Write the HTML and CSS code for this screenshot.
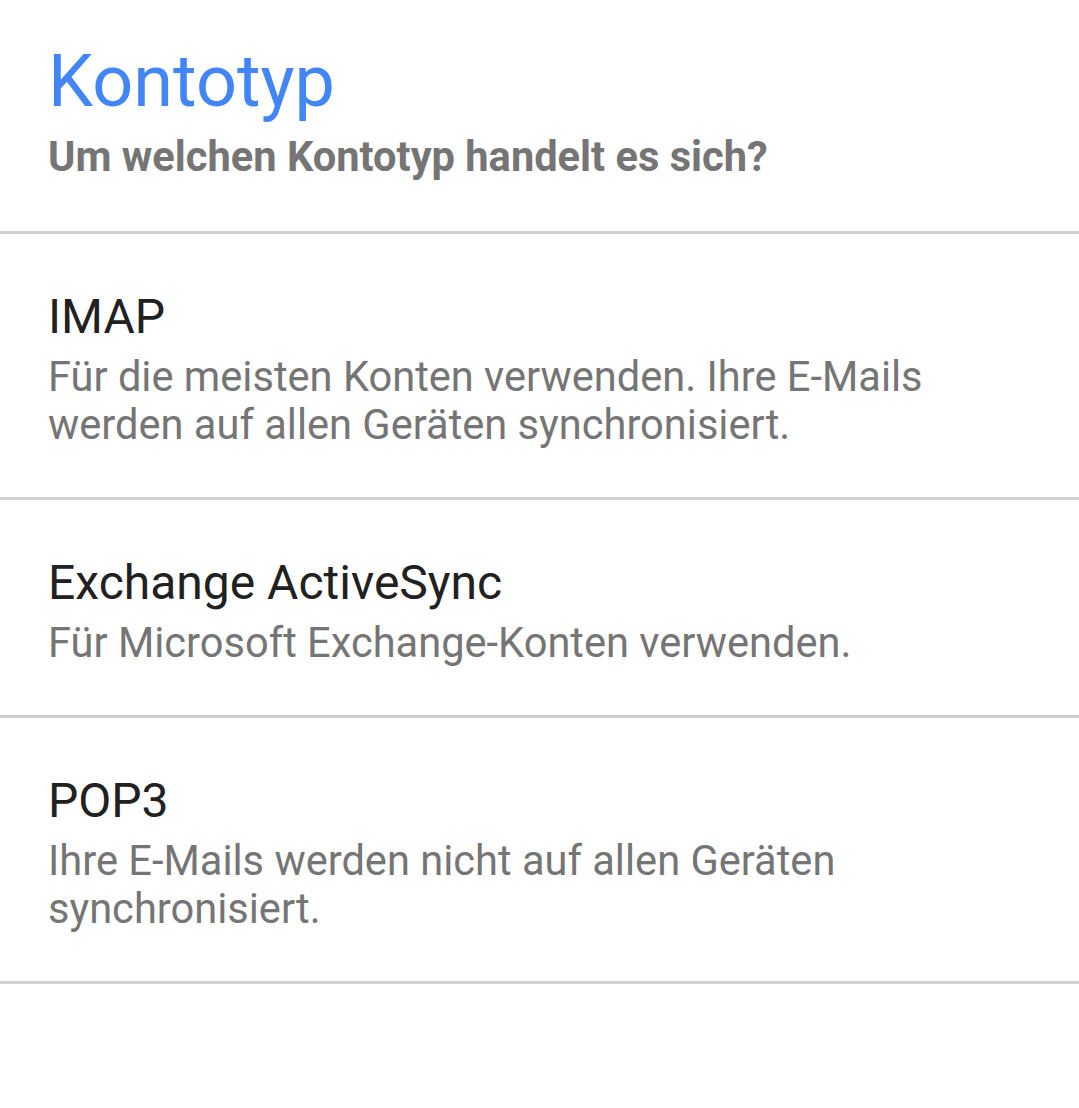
FILE: index.html
```html
<!DOCTYPE html>
<html lang="de">
<head>
<meta charset="utf-8">
<title>Kontotyp</title>
<link rel="stylesheet" href="styles.css">
</head>
<body>
<div class="page">
  <header class="header">
    <h1 class="title">Kontotyp</h1>
    <p class="subtitle">Um welchen Kontotyp handelt es sich?</p>
  </header>
  <ul class="list">
    <li class="item">
      <div class="item-title">IMAP</div>
      <div class="item-desc">Für die meisten Konten verwenden. Ihre E-Mails werden auf allen Geräten synchronisiert.</div>
    </li>
    <li class="item">
      <div class="item-title">Exchange ActiveSync</div>
      <div class="item-desc">Für Microsoft Exchange-Konten verwenden.</div>
    </li>
    <li class="item">
      <div class="item-title">POP3</div>
      <div class="item-desc">Ihre E-Mails werden nicht auf allen Geräten synchronisiert.</div>
    </li>
  </ul>
</div>
</body>
</html>
```
FILE: styles.css
```css
html, body {
  margin: 0;
  padding: 0;
  background: #ffffff;
}
body {
  font-family: Roboto, "Noto Sans", "Liberation Sans", sans-serif;
}
.page {
  width: 1079px;
  min-height: 1108px;
}
.header {
  padding: 40px 48px 50px 48px;
  border-bottom: 3px solid #d0d0d0;
}
.title {
  margin: 0;
  font-size: 72px;
  line-height: 84px;
  font-weight: 400;
  color: #4285f4;
}
.subtitle {
  margin: 9px 0 0 0;
  font-size: 41.6px;
  line-height: 48px;
  font-weight: 700;
  color: #757575;
}
.list {
  list-style: none;
  margin: 0;
  padding: 0;
}
.item {
  padding: 55px 48px 48px 48px;
  border-bottom: 3px solid #d0d0d0;
  display: flex;
  flex-direction: column;
  gap: 8px;
}
.item-title {
  font-size: 48px;
  line-height: 56px;
  color: #212121;
}
.item-desc {
  font-size: 41.6px;
  line-height: 48px;
  color: #757575;
}
```
